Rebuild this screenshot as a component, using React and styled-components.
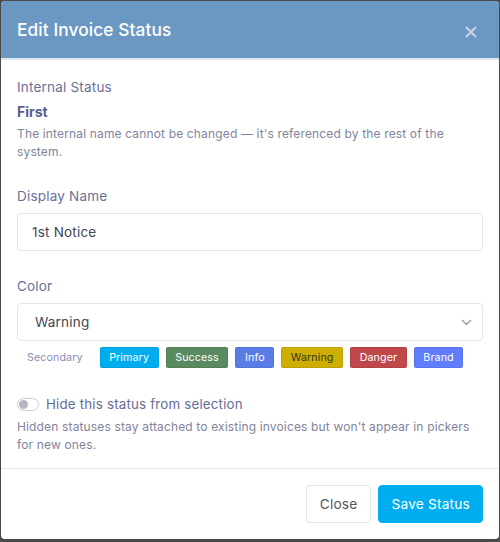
import styled, { createGlobalStyle } from "styled-components";

const Global = createGlobalStyle`
  html, body {
    margin: 0;
    padding: 0;
    background: #4a4a4a;
  }
  body {
    font-family: Inter, "Noto Sans", sans-serif;
  }
`;

const Modal = styled.div`
  width: 498px;
  height: 538px;
  margin: 1px 0 0 1px;
  background: #fff;
  border-radius: 4px;
  overflow: hidden;
  display: flex;
  flex-direction: column;
`;

const Header = styled.div`
  height: 57px;
  flex-shrink: 0;
  background: #6a98c2;
  border-bottom: 2px solid #dfe6ef;
  display: flex;
  align-items: center;
  justify-content: space-between;
  padding: 0 18px 0 16px;
`;

const Title = styled.h2`
  margin: 0;
  color: #fff;
  font-size: 17.3px;
  font-weight: 500;
  letter-spacing: 0.1px;
`;

const CloseX = styled.button`
  border: 0;
  background: none;
  padding: 0;
  margin-top: 5px;
  width: 20px;
  height: 20px;
  display: flex;
  align-items: center;
  justify-content: center;
  cursor: pointer;
`;

const Body = styled.div`
  flex: 1;
  padding: 17px 16px 0 16px;
  border-bottom: 1px solid #e6e8ef;
`;

const Label = styled.div`
  color: #6b7099;
  font-size: 13.5px;
  letter-spacing: 0.2px;
  line-height: 20px;
  margin-bottom: ${(p) => p.gap || 7}px;
`;

const Strong = styled.div`
  color: #5a5e8c;
  font-size: 14px;
  font-weight: 700;
  line-height: 20px;
  margin-bottom: 3px;
`;

const Help = styled.p`
  margin: 0 0 ${(p) => p.after || 0}px;
  color: #81849c;
  font-size: 12px;
  letter-spacing: 0.15px;
  line-height: ${(p) => p.lh || 18}px;
`;

const Field = styled.div`
  box-sizing: border-box;
  height: 38px;
  border: 1px solid #e2e4ec;
  border-radius: 4px;
  display: flex;
  align-items: center;
  justify-content: space-between;
  padding: 0 ${(p) => p.$pr}px 0 ${(p) => p.$pl}px;
  color: #454752;
  font-size: 13.5px;
  letter-spacing: 0.2px;
  margin-bottom: ${(p) => p.$after || 0}px;
`;

const Swatches = styled.div`
  display: flex;
  align-items: center;
  gap: 7px;
  margin-top: 6px;
  padding-left: 10px;
`;

const Swatch = styled.span`
  height: 21px;
  padding: 0 ${(p) => (p.$plain ? 10 : 9.6)}px 0 ${(p) => (p.$plain ? 0 : 9.6)}px;
  border-radius: 2px;
  display: inline-flex;
  align-items: center;
  font-size: 10.7px;
  letter-spacing: 0.1px;
  background: ${(p) => p.$bg || "transparent"};
  color: ${(p) => p.$fg || "#fff"};
  box-shadow: ${(p) => (p.$bg ? "inset 0 0 0 1px rgba(0,0,0,0.07)" : "none")};
`;

const ToggleRow = styled.div`
  display: flex;
  align-items: center;
  gap: 7px;
  height: 20px;
  margin: 26px 0 4px;
`;

const Toggle = styled.span`
  width: 20px;
  height: 11px;
  border: 1px solid #c9ccd6;
  border-radius: 7px;
  position: relative;
  flex-shrink: 0;
  &::after {
    content: "";
    position: absolute;
    left: 1px;
    top: 1px;
    width: 9px;
    height: 9px;
    border-radius: 50%;
    background: #b4b7c0;
  }
`;

const ToggleLabel = styled.span`
  color: #676b96;
  font-size: 13.3px;
  letter-spacing: 0.2px;
`;

const Footer = styled.div`
  height: 70px;
  flex-shrink: 0;
  display: flex;
  align-items: center;
  justify-content: flex-end;
  gap: 7px;
  padding: 0 16px;
`;

const Button = styled.button`
  height: 38px;
  padding: 0 ${(p) => (p.$primary ? 12 : 13)}px;
  border-radius: 4px;
  font-family: inherit;
  font-size: 13.7px;
  letter-spacing: 0.2px;
  border: 1px solid ${(p) => (p.$primary ? "#00aeef" : "#e3e5ec")};
  background: ${(p) => (p.$primary ? "#00aeef" : "#fff")};
  color: ${(p) => (p.$primary ? "#fff" : "#55575f")};
  cursor: pointer;
`;

const swatches = [
  { name: "Secondary", plain: true, fg: "#8a8eb4" },
  { name: "Primary", bg: "#00aeef" },
  { name: "Success", bg: "#5a8a5f" },
  { name: "Info", bg: "#5a7ce6" },
  { name: "Warning", bg: "#ccaf00", fg: "#3a3320" },
  { name: "Danger", bg: "#c0474a" },
  { name: "Brand", bg: "#5f7dfd" },
];

export default function App() {
  return (
    <>
      <Global />
      <Modal>
        <Header>
          <Title>Edit Invoice Status</Title>
          <CloseX aria-label="Close">
            <svg width="12" height="12" viewBox="0 0 12 12">
              <path d="M1 1L11 11M11 1L1 11" stroke="#c5d4e6" strokeWidth="2" />
            </svg>
          </CloseX>
        </Header>
        <Body>
          <Label gap={5}>Internal Status</Label>
          <Strong>First</Strong>
          <Help after={25}>
            The internal name cannot be changed — it's referenced by the rest of the system.
          </Help>
          <Label>Display Name</Label>
          <Field $pl={14} $pr={14} $after={25}>
            1st Notice
          </Field>
          <Label>Color</Label>
          <Field $pl={17} $pr={10}>
            Warning
            <svg width="11" height="7" viewBox="0 0 11 7">
              <path d="M1 1L5.5 5.5L10 1" stroke="#8c8f99" strokeWidth="1.2" fill="none" />
            </svg>
          </Field>
          <Swatches>
            {swatches.map((s) => (
              <Swatch key={s.name} $bg={s.bg} $fg={s.fg} $plain={s.plain}>
                {s.name}
              </Swatch>
            ))}
          </Swatches>
          <ToggleRow>
            <Toggle />
            <ToggleLabel>Hide this status from selection</ToggleLabel>
          </ToggleRow>
          <Help lh={17.5}>
            Hidden statuses stay attached to existing invoices but won't appear in pickers for new ones.
          </Help>
        </Body>
        <Footer>
          <Button>Close</Button>
          <Button $primary>Save Status</Button>
        </Footer>
      </Modal>
    </>
  );
}
